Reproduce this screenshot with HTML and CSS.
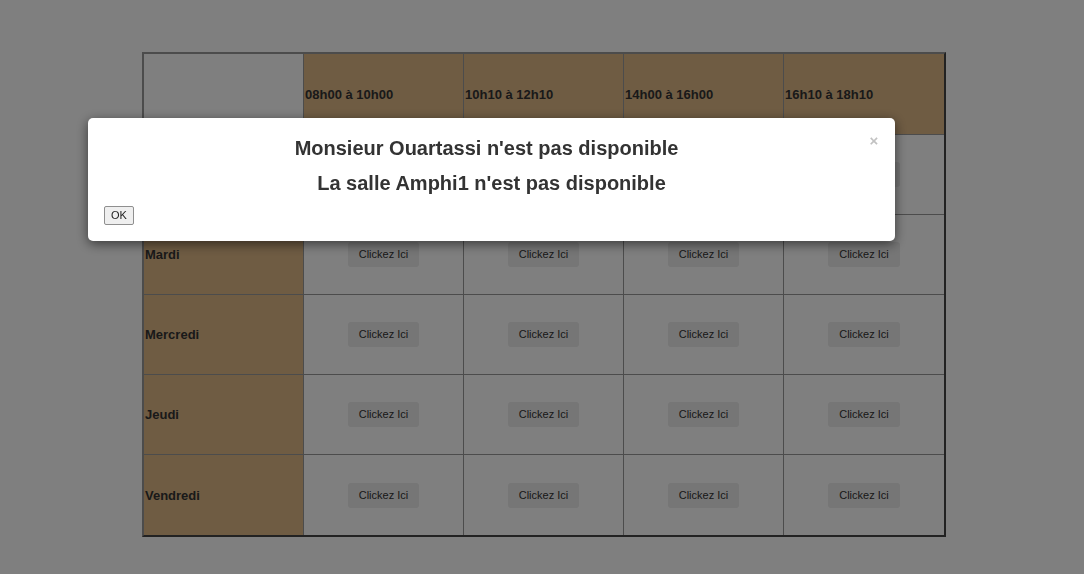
FILE: index.html
```html
<!DOCTYPE html>
<html lang="fr">
<head>
<meta charset="utf-8">
<title>Emploi du temps</title>
<link rel="stylesheet" href="styles.css">
</head>
<body>
<div class="page">
  <table class="timetable">
    <tr class="head-row">
      <th class="corner"></th>
      <th class="slot">08h00 à 10h00</th>
      <th class="slot">10h10 à 12h10</th>
      <th class="slot">14h00 à 16h00</th>
      <th class="slot last-col">16h10 à 18h10</th>
    </tr>
    <tr>
      <th class="day">Lundi</th>
      <td><button class="pick">Clickez Ici</button></td>
      <td><button class="pick">Clickez Ici</button></td>
      <td><button class="pick">Clickez Ici</button></td>
      <td class="last-col"><button class="pick">Clickez Ici</button></td>
    </tr>
    <tr>
      <th class="day">Mardi</th>
      <td><button class="pick">Clickez Ici</button></td>
      <td><button class="pick">Clickez Ici</button></td>
      <td><button class="pick">Clickez Ici</button></td>
      <td class="last-col"><button class="pick">Clickez Ici</button></td>
    </tr>
    <tr>
      <th class="day">Mercredi</th>
      <td><button class="pick">Clickez Ici</button></td>
      <td><button class="pick">Clickez Ici</button></td>
      <td><button class="pick">Clickez Ici</button></td>
      <td class="last-col"><button class="pick">Clickez Ici</button></td>
    </tr>
    <tr>
      <th class="day">Jeudi</th>
      <td><button class="pick">Clickez Ici</button></td>
      <td><button class="pick">Clickez Ici</button></td>
      <td><button class="pick">Clickez Ici</button></td>
      <td class="last-col"><button class="pick">Clickez Ici</button></td>
    </tr>
    <tr class="last-row">
      <th class="day">Vendredi</th>
      <td><button class="pick">Clickez Ici</button></td>
      <td><button class="pick">Clickez Ici</button></td>
      <td><button class="pick">Clickez Ici</button></td>
      <td class="last-col"><button class="pick">Clickez Ici</button></td>
    </tr>
  </table>
</div>

<div class="overlay"></div>
<div class="modal">
  <span class="close">&times;</span>
  <h4 class="msg">Monsieur Ouartassi n'est pas disponible</h4>
  <h4 class="msg second">La salle Amphi1 n'est pas disponible</h4>
  <button class="ok">OK</button>
</div>
</body>
</html>
```

FILE: styles.css
```css
html, body {
  margin: 0;
  padding: 0;
  background: #ffffff;
  font-family: "Liberation Sans", Arial, sans-serif;
  color: #333;
}

.page {
  padding: 52px 0 0 142px;
}

.timetable {
  table-layout: fixed;
  width: 804px;
  border-collapse: separate;
  border-spacing: 0;
  border-style: solid;
  border-width: 2px;
  border-color: #999 #444 #444 #999;
}

.timetable th,
.timetable td {
  height: 80px;
  padding: 0 1px;
  border-right: 1px solid #999;
  border-bottom: 1px solid #999;
  vertical-align: middle;
  font-size: 13px;
  box-sizing: border-box;
}

.timetable .head-row th {
  height: 81px;
}

.timetable .last-col {
  border-right: none;
}

.timetable .last-row th,
.timetable .last-row td {
  border-bottom: none;
}

.timetable .slot,
.timetable .day {
  background: #deb887;
  text-align: left;
  font-weight: bold;
  color: #333;
}

.timetable .corner {
  background: #ffffff;
}

.timetable td {
  text-align: center;
  background: #ffffff;
}

.pick {
  font-family: "Liberation Sans", Arial, sans-serif;
  font-size: 11px;
  color: #333;
  background: #ececec;
  border: none;
  border-radius: 3px;
  padding: 6px 11px;
  line-height: 13px;
}

.overlay {
  position: fixed;
  inset: 0;
  background: rgba(0, 0, 0, 0.5);
}

.modal {
  position: fixed;
  top: 118px;
  left: 88px;
  width: 807px;
  box-sizing: border-box;
  padding: 19px 16px 16px;
  background: #ffffff;
  border-radius: 5px;
  box-shadow: 0 3px 12px rgba(0, 0, 0, 0.55);
}

.close {
  float: right;
  width: 10px;
  text-align: center;
  font-size: 15px;
  font-weight: bold;
  line-height: 12px;
  margin-top: -2px;
  color: #c2c2c2;
}

.msg {
  margin: 0 0 12px;
  font-size: 20px;
  line-height: 23px;
  font-weight: bold;
  text-align: center;
  color: #333;
}

.msg.second {
  margin-bottom: 11px;
}

.ok {
  display: block;
  font-family: "Liberation Sans", Arial, sans-serif;
  font-size: 11px;
  line-height: 13px;
  padding: 2px 6px;
  color: #222;
  background: #efefef;
  border: 1px solid #8f8f8f;
  border-radius: 2px;
}
```
